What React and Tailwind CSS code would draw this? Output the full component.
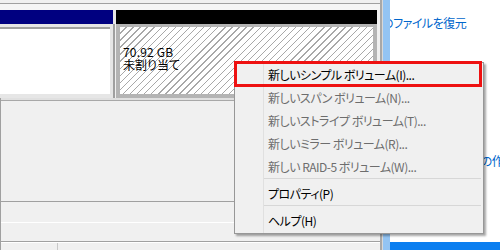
export default function App() {
  const jp = "[font-family:'Noto_Sans_CJK_JP','Noto_Sans',sans-serif] [font-feature-settings:'palt']";

  return (
    <div className={`relative flex h-[250px] w-[500px] overflow-hidden bg-[#f0f0f0] text-[12px] ${jp}`}>
      {/* Disk map column */}
      <div className="flex w-[380px] flex-col">
        <div className="h-[3px] bg-[#f0f0f0]" />
        <div className="h-px bg-[#a0a0a0]" />
        <div className="h-[6px] bg-[#f5f5f5]" />

        {/* partition header bars */}
        <div className="flex h-[14px]">
          <div className="w-[113px] bg-[#000080]" />
          <div className="w-[3px] bg-[#e6e6e6]" />
          <div className="w-[261px] bg-black" />
          <div className="flex-1 bg-[#f0f0f0]" />
        </div>

        {/* partitions */}
        <div className="flex h-[74px]">
          <div className="flex w-[115px] border-r-2 border-[#a0a0a0] bg-[#e6e6e6] pt-[3px] pr-[3px] pb-[4px]">
            <div className="flex flex-1 items-start border-t-2 border-[#a0a0a0] bg-white pt-[34px] leading-none text-[#0066cc]">
              <span className="-ml-[4px]">)</span>
            </div>
          </div>
          <div className="ml-px flex w-[261px] border-[4px] border-[#b4b4b4] border-t-[3px] bg-[repeating-linear-gradient(135deg,#ffffff_0_4px,#a8a8a8_4px_5px)]">
            <div className="flex flex-col pl-[3px] pt-[18px] leading-[13px] text-black">
              <span className="w-fit tracking-[0.2px]">70.92 GB</span>
              <span className="w-fit">未割り当て</span>
            </div>
          </div>
          <div className="flex-1 bg-[#f0f0f0]" />
        </div>

        {/* lower list area */}
        <div className="flex flex-1 flex-col border-l border-[#a0a0a0]">
          <div className="h-[2px] bg-[#e0e0e0]" />
          <div className="h-px bg-[#a8a8a8]" />
          <div className="h-[100px]" />
          <div className="h-px bg-[#a0a0a0]" />
          <div className="h-[20px]" />
          <div className="h-px bg-white" />
          <div className="h-[18px]" />
          <div className="h-px bg-[#a0a0a0]" />
          <div className="h-px bg-white" />
          <div className="flex flex-1">
            <div className="w-[57px] border-r border-[#c8c8c8]" />
          </div>
        </div>
      </div>

      {/* splitter */}
      <div className="w-[3px] border-l-2 border-[#a8a8a8] bg-[#d8d8d8]" />
      <div className="w-[7px] bg-[#93c4f3]" />

      {/* action pane */}
      <div className="flex flex-1 flex-col overflow-hidden bg-white tracking-[-0.5px] text-[#0066cc]">
        <div className="mt-[16px] -ml-[8px] whitespace-nowrap leading-[14px]">のファイルを復元</div>
        <div className="mt-[124px] ml-[7px] whitespace-nowrap leading-[14px]">新しいボリュームの作成</div>
        <div className="mt-auto h-[8px] bg-[#0a7ef0]" />
      </div>

      {/* context menu */}
      <div className="absolute left-[234px] top-[62px] flex w-[250px] flex-col border border-[#979797] bg-[#f0f0f0] pb-[1px] tracking-[-0.5px] shadow-[2px_2px_2px_rgba(0,0,0,0.35)]">
        <div className="pointer-events-none absolute inset-y-0 left-[28px] w-px bg-[#e0e0e0]" />
        <div className="relative flex h-[23px] items-center pl-[33px] text-black">
          新しいシンプル ボリューム(I)...
          <div className="absolute -left-px -top-[2px] h-[26px] w-[248px] border-[3px] border-[#ee1111]" />
        </div>
        <div className="flex h-[23px] items-center pl-[33px] text-[#6d6d6d]">新しいスパン ボリューム(N)...</div>
        <div className="flex h-[23px] items-center pl-[33px] text-[#6d6d6d]">新しいストライプ ボリューム(T)...</div>
        <div className="flex h-[23px] items-center pl-[33px] text-[#6d6d6d]">新しいミラー ボリューム(R)...</div>
        <div className="flex h-[23px] items-center pl-[33px] text-[#6d6d6d]">新しい RAID-5 ボリューム(W)...</div>
        <div className="ml-[29px] mr-[2px] mb-[3px] h-px bg-[#d7d7d7]" />
        <div className="flex h-[23px] items-center pl-[33px] text-black">プロパティ(P)</div>
        <div className="ml-[29px] mr-[2px] mb-[3px] h-px bg-[#d7d7d7]" />
        <div className="flex h-[23px] items-center pl-[33px] text-black">ヘルプ(H)</div>
      </div>
    </div>
  );
}
